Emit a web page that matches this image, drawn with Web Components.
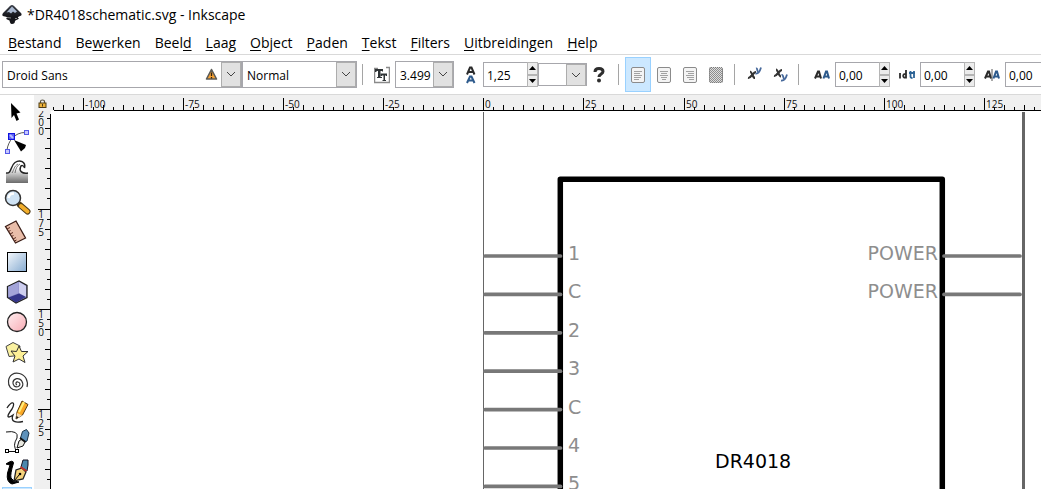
<!DOCTYPE html>
<html lang="nl">
<head>
<meta charset="utf-8">
<title>*DR4018schematic.svg - Inkscape</title>
<style>
html, body { margin: 0; height: 100%; overflow: hidden; background: #fff; }
body { font-family: "Open Sans", "Noto Sans", sans-serif; color: #000; }
</style>
</head>
<body>
<ink-window></ink-window>
<script>
function define(name, html, setup) {
  customElements.define(name, class extends HTMLElement {
    constructor() {
      super();
      this.attachShadow({ mode: 'open' });
    }
    connectedCallback() {
      if (this.shadowRoot.childNodes.length) return;
      this.render();
      if (setup) setup(this);
    }
    render() {
      const t = document.createElement('template');
      t.innerHTML = typeof html === 'function' ? html(this) : html;
      this.shadowRoot.replaceChildren(t.content.cloneNode(true));
    }
  });
}

/* ---------- icons of the text toolbar ---------- */
const lines = xs => xs.map(([a, b], i) => `<path d="M${a} ${5.5 + i * 2}H${b}" stroke="#a2a2a2"/>`).join('');
const sheet = l => `<rect x="1.5" y="1.5" width="13" height="15" rx="1.5" fill="#f4f4f4" stroke="#8b8b8b"/>${l}`;
const barIcons = {
  size: [16, 18, `<path d="M4 2.500H.5V16.500H15.500V1.500H12" fill="none" stroke="#8a8a8a" stroke-width="1.500"/><path d="M1 3H9V5.500H8V5H6.500V11H8V12H3V11H4V5H2.500V6H1Z" fill="#2f3436"/><path d="M6.500 7.500H13V10H12V9.500H11V14H12V15H8.500V14H9.500V9.500H8V10H6.500Z" fill="#2f3436"/>`],
  line: [12, 18, `<path d="M2 8.500 5 1.500H6.500L9.500 8.500M3.500 6H8" fill="none" stroke="#2b2b2b" stroke-width="2"/><path d="M2 17 5 10.500H6.500L9.500 17M3.500 14.500H8" fill="none" stroke="#2d5a8c" stroke-width="2"/>`],
  help: [14, 18, `<path d="M3 6C3 3 5 2.500 7 2.500C9.500 2.500 11 3.500 11 5.500C11 8 7 8 7 11" fill="none" stroke="#2e2e2e" stroke-width="3"/><circle cx="7" cy="14.500" r="2" fill="#2e2e2e"/>`],
  left: [16, 18, sheet(lines([[4, 12], [4, 10], [4, 12], [4, 11], [4, 9]]))],
  center: [16, 18, sheet(lines([[4, 12], [5, 11], [4, 12], [5, 11], [6, 10]]))],
  right: [16, 18, sheet(lines([[4, 12], [6, 12], [4, 12], [5, 12], [7, 12]]))],
  justify: [16, 18, `<defs><pattern id="c" width="2" height="2" patternUnits="userSpaceOnUse"><rect width="2" height="2" fill="#ddd"/><path d="M0 0h1v1H0zM1 1h1v1H1z" fill="#8c8c8c"/></pattern></defs><rect x="1" y="1" width="14" height="16" rx="2" fill="url(#c)"/><rect x="1.500" y="1.500" width="13" height="15" rx="1.500" fill="none" stroke="#777" stroke-dasharray="1 1"/>`],
  sup: [16, 18, `<path d="M4 5.500C6 5.500 6.500 12 9 12M10 6C7 6 5 12.500 2 12" fill="none" stroke="#333" stroke-width="2.200"/><path d="M10 2.500C11.500 2 11 5 12 5.500M15 1.500C14 5 12 8 9.500 7.500" fill="none" stroke="#47699b" stroke-width="1.800"/>`],
  sub: [16, 18, `<path d="M4 3.500C6 3.500 6.500 10.500 9 10.500M10 4C7 4 5 10.500 2 10" fill="none" stroke="#333" stroke-width="2.200"/><path d="M9.500 9C11.500 8.500 11 12 12 12.500M15 8.500C14 12 12 15 9 14.500" fill="none" stroke="#47699b" stroke-width="1.800"/>`],
  letter: [16, 18, `<path d="M1 12.500 4 5.500H5L7 12.500M2.500 10.500H6.500" fill="none" stroke="#2b2b2b" stroke-width="2"/><path d="M9.500 12.500 12 5.500H13L15 12.500M11 10.500H14.500" fill="none" stroke="#2d5a8c" stroke-width="2"/>`],
  word: [16, 18, `<path d="M1 7V12.500M7 4V12.500M7 8C3.500 7 3 12.500 7 11.500" fill="none" stroke="#2b2b2b" stroke-width="1.800"/><path d="M11.500 5V10.500Q11.500 12 13.500 12M10 7H16M15 5V12" fill="none" stroke="#2d6496" stroke-width="1.800"/>`],
  kern: [16, 18, `<path d="M1 12.500 4 5.500H5L7 12.500M2.500 10.500H6.500" fill="none" stroke="#2b2b2b" stroke-width="2"/><path d="M8 3V15" stroke="#555"/><path d="M9.500 12.500 12 5.500H13L15 12.500M11 10.500H14.500" fill="none" stroke="#2d5a8c" stroke-width="2"/>`]
};
const svg = ([w, h, body]) => `<svg width="${w}" height="${h}" viewBox="0 0 ${w} ${h}" aria-hidden="true">${body}</svg>`;

/* ---------- icons of the toolbox ---------- */
const tools = [
  ['Selecteren', `<path d="M9 6 18.500 15.500 14.500 16.500 17 22.500 14.500 24 12 18 9.500 21Z" fill="#000"/>`],
  ['Knooppunten', `<path d="M5 23C6 15 12 5 24 5.500" fill="none" stroke="#555"/><path d="M12 13 24 18 23 21 19 24.500Z" fill="#000"/><rect x="6.500" y="6.500" width="6" height="6" fill="#5c62f4" stroke="#1012e0"/><path d="M8 8 11 11" stroke="#b9bcff" stroke-width="2"/><rect x="22.500" y="3.500" width="4" height="4" fill="#c6c8ff" stroke="#5358e6"/><rect x="3.500" y="22.500" width="4" height="4" fill="#c6c8ff" stroke="#5358e6"/>`],
  ['Boetseren', `<defs><linearGradient id="w" x2="0" y2="1"><stop offset=".3" stop-color="#fff"/><stop offset="1" stop-color="#6a6a6a"/></linearGradient></defs><path d="M4 26V16C10 17 9 9 14 5.500C18 3 23 5 23 9C22 7 19 8 18.500 10C17 14 20 17 26 16V26Z" fill="url(#w)"/><path d="M4 16C10 17 8 9 13 5.500C18 2 24 5 22.500 11C22 8 19 8 18.500 10C17 14 20 17 26 16" fill="none" stroke="#222" stroke-width="1.500"/><path d="M10 16C12 13 12 9 16 7M13 16Q14 9 18 7" fill="none" stroke="#555" stroke-width=".8"/>`],
  ['Zoomen', `<path d="m18 18 7.500 6.500" stroke="#4c3a18" stroke-width="6" stroke-linecap="round"/><path d="m19 19 6.500 5.500" stroke="#f2ae2c" stroke-width="4" stroke-linecap="round"/><circle cx="11" cy="11" r="7.500" fill="#cfe3f4" stroke="#333" stroke-width="1.500"/><path d="M6.500 11Q7 6.500 12 6.500" fill="none" stroke="#fff" stroke-width="2.500"/>`],
  ['Meten', `<path d="M3.500 9.500 14 4 23.500 21 13.500 26Z" fill="#e9bda9" stroke="#3a1d16" stroke-width="1.300"/><path d="m5 12 3-1.500M6.500 14.500 8.500 13.500M8 17l3-1.500M9.500 19.500l2-1M11 22l3-1.500M12.500 24l2-1" stroke="#5c2d22"/>`],
  ['Rechthoeken', `<defs><linearGradient id="r" x2="1" y2="1"><stop stop-color="#f4f8fc"/><stop offset="1" stop-color="#86abd1"/></linearGradient></defs><rect x="5.500" y="5.500" width="19" height="19" fill="url(#r)" stroke="#000"/>`],
  ['3D-kubussen', `<path d="M5.500 9.500 17 4 25 8.500V20.500L14 26 5.500 20.500Z" fill="#9090cd" stroke="#222" stroke-width="1.300"/><path d="M6 10 16.500 5V16L6.500 20Z" fill="#a3a4d9"/><path d="M17 5 24 9V20L17 16Z" fill="#cecfef"/><path d="M6.500 20.500 17 16.500 24 20 14 25.500Z" fill="#34358a"/>`],
  ['Ellipsen', `<defs><linearGradient id="e" x2="1" y2="1"><stop stop-color="#fff0f1"/><stop offset="1" stop-color="#f8aab3"/></linearGradient></defs><circle cx="15" cy="15" r="9.500" fill="url(#e)" stroke="#222" stroke-width="1.300"/>`],
  ['Sterren', `<path d="M4 9.500 11 5.500 18 9 16 18.500 7 19.500Z" fill="#faf1a0" stroke="#444"/><path d="m17 9 2.500 5.500 6.500 0-5 4.500 2 6.500-6-3.500-6 3 2-6-4-5 5.500.500Z" fill="#fdf096" stroke="#333"/>`],
  ['Spiralen', `<path d="M15 18C13 17 14 14.500 16 15C18.500 15.500 18.500 18.500 16.500 19.500C13 21 10.500 18 11 15C12 11 17 10.500 19.500 13.500C22.500 18 20 22 15.500 23C9 23.500 6 19 6.500 14C7 8 12 5 17.500 6.500C23.500 8 26.500 14 25 20" fill="none" stroke="#333" stroke-width="1.200"/>`],
  ['Potlood', `<path d="M5 11C10 3 14 5 10 12C4 20 5 22 11 18C8 25 14 26 21 24.500" fill="none" stroke="#222" stroke-width="1.300"/><path d="m14 22 1-7L20 4 26 7.500 20.500 18Z" fill="#fba926" stroke="#543a11"/><path d="M17 15 22 5" stroke="#fff07c" stroke-width="2"/><path d="m14 22 1-6 5 2.500Z" fill="#f5dbb2"/><path d="m14 22 .5-3 2 1.200Z" fill="#000"/>`],
  ['Bézier', `<path d="M5 24.500H16M4 5Q17 3 15 11 10 19 15 24" fill="none" stroke="#111"/><path d="m15 21 2-7 3-2 3 3-2 4Z" fill="#e7e7df" stroke="#111"/><path d="m18.500 11 2-6.500 4-2 2.500 3.500-2 8-2 1Z" fill="#5c91bb" stroke="#173247"/><path d="m18 11 5.500 4" stroke="#111" stroke-width="2"/><rect x="3.500" y="22.500" width="3" height="3" fill="#fff" stroke="#000"/><rect x="13.500" y="22.500" width="3" height="3" fill="#fff" stroke="#000"/>`],
  ['Kalligrafie', `<path d="M4 7Q11 2 11.500 6 8 17 9 21 11 25 17 25L10 27Q4 25 5.500 16L8 8Z" fill="#000" stroke="#000"/><path d="m12 24 2-11 6-2 4 4-3 7Z" fill="#f5d17a" stroke="#222" stroke-width="1.300"/><path d="m12.500 23.500 5-6" stroke="#000"/><circle cx="18" cy="17" r="1.300"/><path d="m19 10 2-7h5v5l-1 6Z" fill="#4b87ad" stroke="#112"/><path d="m18.500 10 6 4" stroke="#c2352b" stroke-width="2"/>`],
  ['Tekst', `<path d="M7 24 14 6H16L23 24M10 18H20" fill="none" stroke="#111" stroke-width="2"/>`]
];

define('ink-title', `
<style>
:host { display: flex; align-items: center; height: 30px; box-sizing: border-box; padding-left: 2px; gap: 5px; font-size: 14px; line-height: 20px; flex: none; }
h1 { margin: 0; font: inherit; white-space: nowrap; }
</style>
<svg width="20" height="20" viewBox="0 0 20 20" aria-hidden="true">
<defs><linearGradient id="g" x2="0" y2="1"><stop stop-color="#3b3f49"/><stop offset=".6" stop-color="#15161a"/></linearGradient></defs>
<path d="M10 0C11.500 0 12 1 13 2L19 8C20.500 10 19 10.500 17 11.500C15 12.500 16 13 17 13.500C16 15 14 14.500 13 16C13 18 12 19 10 19C8 19 8 17 7.500 15.500C6 14.500 4 14.500 4 13.500C6 13 5 12 3 11.500C0 11 -.5 9.500 1.500 7.500L7 2C8 1 8.500 0 10 0Z" fill="url(#g)"/>
<path d="M10 1.500 15 6.500 13 8 11 6.500 9 8.500 7 7 4.500 7.500Z" fill="#a9b8cf"/><path d="M5 12.500 9 13M13 13.500H15" stroke="#888"/></svg>
<h1><slot></slot></h1>`);

define('ink-menu', `
<style>
:host { display: flex; gap: 14px; height: 24px; padding-left: 8px; font-size: 14px; line-height: 26px; border-bottom: 1px solid #d9d9d9; flex: none; }
button { all: unset; white-space: nowrap; }
u { text-underline-offset: 2px; text-decoration-thickness: 1px; }
</style>
${['<u>B</u>estand', 'Be<u>w</u>erken', 'Beel<u>d</u>', '<u>L</u>aag', '<u>O</u>bject', '<u>P</u>aden', '<u>T</u>ekst', '<u>F</u>ilters', '<u>U</u>itbreidingen', '<u>H</u>elp'].map(m => `<button type="button">${m}</button>`).join('')}`);

define('ink-combo', el => `
<style>
:host { display: grid; grid-template-columns: 1fr 20px; box-sizing: border-box; height: 27px; border: 1px solid #a7a7ac; background: #fff; flex: none; }
:host([small]) { height: 23px; }
select { grid-area: 1 / 1 / 2 / 3; appearance: none; border: 0; margin: 0; padding: 2px 20px 0 4px; background: none; font: 12px/20px "Open Sans", sans-serif; color: #000; width: 100%; min-width: 0; text-overflow: clip; border-radius: 0; }
.arrow { grid-area: 1 / 2; display: grid; place-items: center; background: #e1e1e1; border: 1px solid #adadad; pointer-events: none; }
.warn { grid-area: 1 / 1; justify-self: end; align-self: center; margin-right: 3px; pointer-events: none; }
</style>
<select aria-label="${el.getAttribute('label')}"><option>${el.getAttribute('value')}</option></select>
${el.hasAttribute('warning') ? `<svg class="warn" width="13" height="13" viewBox="0 0 13 13" aria-hidden="true"><path d="M6.500 1.500 11.500 11H1.500Z" fill="#f5a032" stroke="#5b5b57" stroke-width="1.600" stroke-linejoin="round"/><path d="M6.500 4.500V8M6.500 9V10.500" stroke="#2d2417" stroke-width="1.300"/></svg>` : ''}
<span class="arrow"><svg width="10" height="7" viewBox="0 0 10 7" aria-hidden="true"><path d="m1 1 4 4 4-4" fill="none" stroke="#444"/></svg></span>`);

define('ink-spin', el => `
<style>
:host { display: flex; align-items: center; flex: none; }
input { box-sizing: border-box; width: 44px; height: 25px; border: 1px solid #a7a7ac; border-right: 0; border-radius: 0; margin: 0; padding: 2px 3px 0; font: 12px/20px "Open Sans", sans-serif; color: #000; background: #fff; }
.steps { display: grid; width: 11px; height: 25px; }
button { padding: 0; margin: 0; border: 1px solid #b5b5b5; background: #ececec; display: grid; place-items: center; min-height: 0; border-radius: 0; }
</style>
<input type="text" inputmode="decimal" aria-label="${el.getAttribute('label')}" value="${el.getAttribute('value')}">
<span class="steps"><button type="button" aria-label="Hoger"><svg width="7" height="4" viewBox="0 0 7 4"><path d="M0 4 3.500 0 7 4Z"/></svg></button><button type="button" aria-label="Lager"><svg width="7" height="4" viewBox="0 0 7 4"><path d="M0 0 3.500 4 7 0Z"/></svg></button></span>`);

define('ink-icon', el => `
<style>:host { display: block; flex: none; } svg { display: block; }</style>${svg(barIcons[el.getAttribute('name')])}`);

define('ink-toggle', el => `
<style>
:host { display: block; flex: none; }
button { display: grid; place-items: center; box-sizing: border-box; width: 26px; height: 35px; padding: 0; margin: 0; border: 1px solid transparent; background: none; }
:host([active]) button { background: #cce8ff; border-color: #99d1ff; }
</style><button type="button" aria-label="${el.getAttribute('label')}"><slot></slot></button>`);

define('ink-textbar', `
<style>
:host { display: flex; align-items: center; height: 39px; padding-left: 2px; border-bottom: 1px solid #d9d9d9; overflow: hidden; flex: none; }
.group { display: flex; align-items: center; flex: none; }
.rule { width: 1px; height: 21px; background: #a5a5a5; flex: none; }
.family { width: 240px; } .style { width: 115px; } .size { width: 59px; } .unit { width: 49px; }
.fonts { margin-right: 5px; }
.metrics { padding: 0 12px 0 11px; gap: 5px; }
.metrics .line { margin-left: 6px; }
.metrics .spin { margin-left: 1px; }
.pair { display: flex; align-items: center; }
.align { padding: 0 5px 0 6px; }
.script { padding: 0 5px 0 6px; }
.spacing { padding-left: 15px; gap: 9px; }
.spacing .pair { gap: 5px; }
</style>
<div class="group fonts"><ink-combo class="family" label="Lettertype" value="Droid Sans" warning></ink-combo><ink-combo class="style" label="Stijl" value="Normal"></ink-combo></div>
<div class="rule"></div>
<div class="group metrics">
<ink-icon name="size"></ink-icon><ink-combo class="size" label="Grootte" value="3.499"></ink-combo>
<ink-icon class="line" name="line"></ink-icon>
<div class="pair"><ink-spin class="spin" label="Regelafstand" value="1,25"></ink-spin><ink-combo class="unit" small label="Eenheid" value=""></ink-combo></div>
<ink-icon name="help"></ink-icon>
</div>
<div class="rule"></div>
<div class="group align">
<ink-toggle active label="Links uitlijnen"><ink-icon name="left"></ink-icon></ink-toggle><ink-toggle label="Centreren"><ink-icon name="center"></ink-icon></ink-toggle><ink-toggle label="Rechts uitlijnen"><ink-icon name="right"></ink-icon></ink-toggle><ink-toggle label="Uitvullen"><ink-icon name="justify"></ink-icon></ink-toggle>
</div>
<div class="rule"></div>
<div class="group script"><ink-toggle label="Superscript"><ink-icon name="sup"></ink-icon></ink-toggle><ink-toggle label="Subscript"><ink-icon name="sub"></ink-icon></ink-toggle></div>
<div class="rule"></div>
<div class="group spacing">
<div class="pair"><ink-icon name="letter"></ink-icon><ink-spin label="Letterafstand" value="0,00"></ink-spin></div>
<div class="pair"><ink-icon name="word"></ink-icon><ink-spin label="Woordafstand" value="0,00"></ink-spin></div>
<div class="pair"><ink-icon name="kern"></ink-icon><ink-spin label="Spatiëring" value="0,00"></ink-spin></div>
</div>`);

define('ink-toolbox', `
<style>
:host { display: flex; flex-direction: column; align-items: center; box-sizing: border-box; padding-top: 2px; overflow: hidden; min-height: 0; }
button { flex: none; box-sizing: border-box; width: 30px; height: 30px; padding: 0; margin: 0; border: 0; background: none; }
button:last-of-type { background: #cce8ff; box-shadow: inset 0 0 0 1px #99d1ff; }
svg { display: block; }
</style>
${tools.map(([n, b]) => `<button type="button" aria-label="${n}">${svg([30, 30, b])}</button>`).join('')}`);

/* A ruler draws a labelled mark every 25 units, with nine short marks between.
   It covers the visible window only and is drawn again when the window changes. */
define('ink-ruler', el => {
  const vertical = el.hasAttribute('vertical');
  const origin = +el.getAttribute('origin');
  const step = 100.14;
  const end = vertical ? innerHeight - 111 : innerWidth - 51;
  let ticks = '', text = '';
  for (let k = Math.floor(-origin / step) - 1; origin + k * step < end; k++) {
    const at = origin + k * step;
    for (let n = 0; n < 10; n++) {
      const p = Math.floor(at + n * step / 10) + 0.5;
      const len = n === 0 ? 12 : n % 2 ? 3 : 5;
      if (p < 1 || p > end) continue;
      ticks += vertical ? `M${16 - len} ${p}H16` : `M${p} ${15 - len}V15`;
    }
    if (vertical) {
      const label = String(Math.abs(175 - 25 * k));
      if (at > -10) [...label].forEach((d, i) => {
        text += `<text x="7" y="${Math.floor(at) + 9 + i * 9}" text-anchor="middle">${d}</text>`;
      });
    } else if (at > 0) {
      text += `<text x="${Math.floor(at) + 2}" y="13">${25 * k}</text>`;
    }
  }
  return `
<style>
:host { display: block; background: #f0f0f0; overflow: hidden; min-width: 0; min-height: 0; }
svg { display: block; width: 100%; height: 100%; }
text { font: 10px "Open Sans", sans-serif; fill: #111; }
</style>
<svg>${text}<path d="${ticks}" stroke="#000" fill="none"/><path d="${vertical ? `M16.500 3V${end}` : `M3 15.500H${end}`}" stroke="#000"/></svg>`;
}, el => addEventListener('resize', () => el.render()));

define('ink-lock', `
<style>
:host { display: grid; place-items: center; background: #f0f0f0; }
button { all: unset; display: block; } svg { display: block; }
</style>
<button type="button" aria-label="Hulplijnen vergrendelen"><svg width="9" height="9" viewBox="0 0 9 9"><path d="M2.500 4V2.500Q2.500 1 4.500 1T6.500 2.500V4" fill="none" stroke="#55503f" stroke-width="1.200"/><rect x="1" y="4" width="7" height="4.500" fill="#edb23b" stroke="#4e3c15"/><path d="M4.500 5V7.500" stroke="#4e3c15"/></svg></button>`);

define('ink-canvas', () => {
  const pins = ['1', 'C', '2', '3', 'C', '4', '5'];
  const y = i => 145 + i * 38.4;
  return `
<style>
:host { display: block; background: #fff; overflow: hidden; min-width: 0; min-height: 0; }
svg { display: block; width: 100%; height: 100%; }
text { font: 19px "DejaVu Sans", Verdana, sans-serif; fill: #8e8e8e; }
.name { fill: #000; }
</style>
<svg role="img" aria-label="DR4018">
<path d="M432.500 1V900" stroke="#666"/><path d="M972.500 1V900" stroke="#666" stroke-width="3"/>
<rect x="509.300" y="68.300" width="382" height="700" fill="none" stroke="#000" stroke-width="5.500" stroke-linejoin="round"/>
<g stroke="#787878" stroke-width="3.700" stroke-linecap="round">
${pins.map((p, i) => `<path d="M434 ${y(i)}H509.500"/>`).join('')}
${[0, 1].map(i => `<path d="M893 ${y(i)}H969"/>`).join('')}
</g>
${pins.map((p, i) => `<text x="517" y="${Math.round(y(i) + 4)}">${p}</text>`).join('')}
${[0, 1].map(i => `<text x="887" y="${Math.round(y(i) + 4)}" text-anchor="end">POWER</text>`).join('')}
<text class="name" x="664" y="357">DR4018</text>
</svg>`;
});

define('ink-window', `
<style>
:host { display: flex; flex-direction: column; height: 100vh; }
main { flex: 1; min-height: 0; display: grid; grid-template: 16px minmax(0, 1fr) / 34px 17px minmax(0, 1fr); }
ink-toolbox { grid-row: 1 / 3; }
</style>
<ink-title>*DR4018schematic.svg - Inkscape</ink-title>
<ink-menu></ink-menu>
<ink-textbar></ink-textbar>
<main>
<ink-toolbox></ink-toolbox>
<ink-lock></ink-lock>
<ink-ruler origin="432.8"></ink-ruler>
<ink-ruler vertical origin="98"></ink-ruler>
<ink-canvas></ink-canvas>
</main>`);
</script>
</body>
</html>
